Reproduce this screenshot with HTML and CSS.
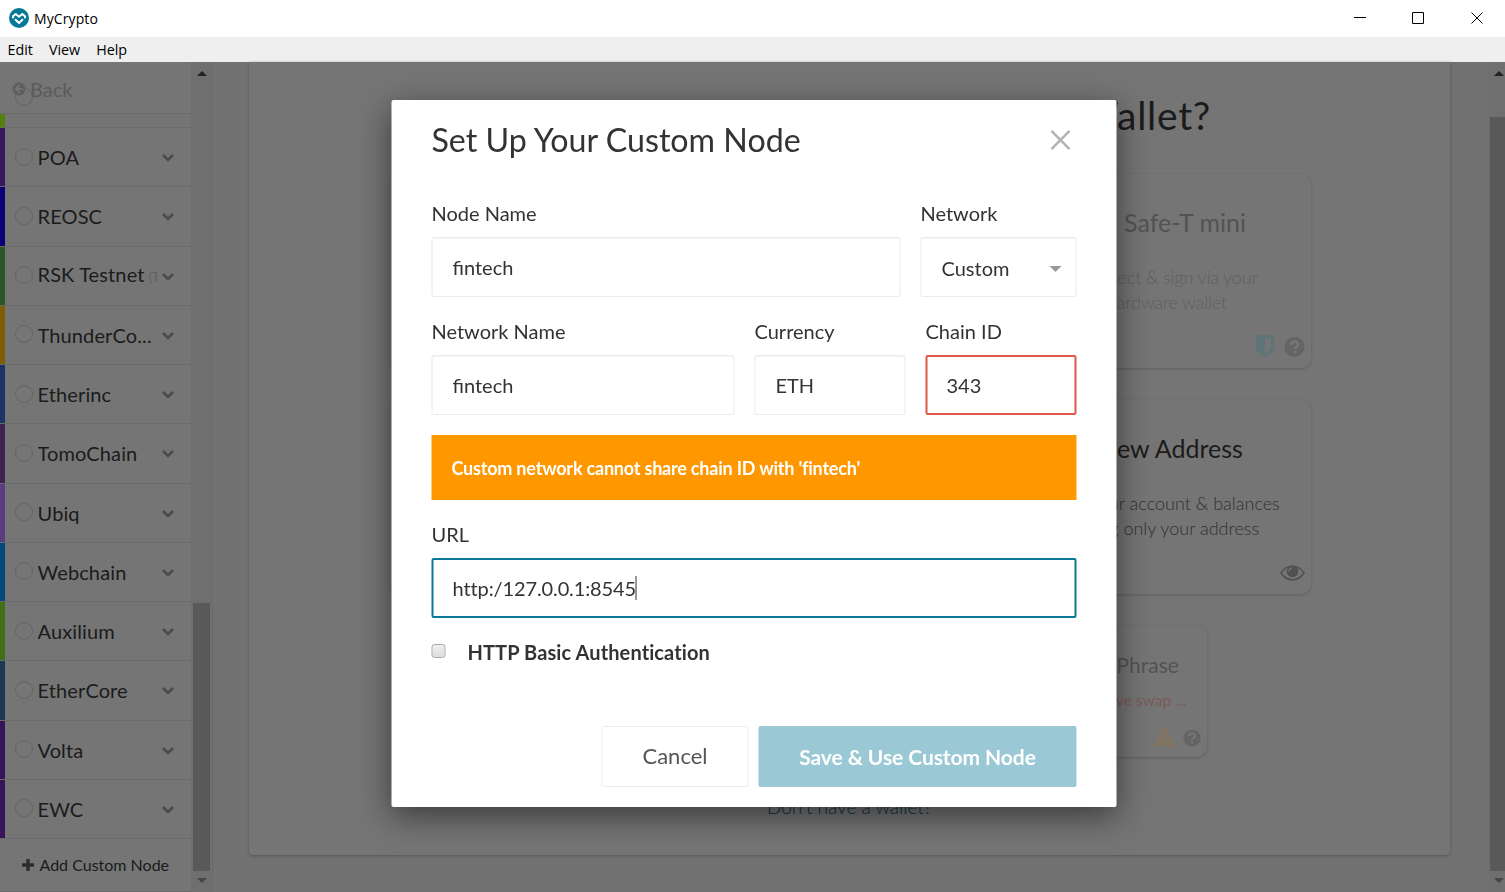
FILE: index.html
```html
<!DOCTYPE html>
<html lang="en">
<head>
<meta charset="utf-8">
<title>MyCrypto</title>
<link rel="stylesheet" href="styles.css">
</head>
<body>
<svg class="sprites" aria-hidden="true">
  <symbol id="chevron" viewBox="0 0 12 9"><path d="M1 2l5 5 5-5" fill="none" stroke="currentColor" stroke-width="2.6"/></symbol>
  <symbol id="help" viewBox="0 0 22 22"><circle cx="11" cy="11" r="10.5" fill="currentColor"/><path d="M7.3 8.6C7.3 4.400 14.900 4.400 14.900 8.400c0 2.600-3.600 2.600-3.600 5" fill="none" stroke="#757575" stroke-width="2.8"/><rect x="9.600" y="14.900" width="3.200" height="3" fill="#757575"/></symbol>
</svg>
<header class="titlebar">
  <svg class="logo" viewBox="0 0 20 20"><circle cx="10" cy="10" r="10" fill="#077896"/><path d="M4 9.600V8.300L6.700 6 10 8.700 13.300 6 16 8.300V9.600M6.600 11.800L10 15l3.400-3.200" fill="none" stroke="#fff" stroke-width="2" stroke-linejoin="round" stroke-linecap="round"/></svg>
  <span class="app-name">MyCrypto</span>
  <svg class="win" viewBox="0 0 175 37" fill="none" stroke="#000"><path d="M24 17.500h12M82.500 12.500h11v11h-11zM141.500 12.500l11 11M152.500 12.500l-11 11"/></svg>
</header>
<nav class="menubar"><span>Edit</span><span>View</span><span>Help</span></nav>
<main class="app">
  <aside class="sidebar">
    <div class="back"><svg viewBox="0 0 14 14"><circle cx="7" cy="7" r="6.500" fill="#5e5e5e"/><path d="M7.500 3L4 7l3.500 4M4 7h7" fill="none" stroke="#777" stroke-width="2"/></svg><span>Back</span><i class="radio"></i></div>
    <div class="stub"></div>
    <div class="net poa"><i class="radio"></i><span>POA</span><svg><use href="#chevron"/></svg></div>
    <div class="net reosc"><i class="radio"></i><span>REOSC</span><svg><use href="#chevron"/></svg></div>
    <div class="net rsk"><i class="radio"></i><span>RSK Testnet <small>(Testnet)</small></span><svg><use href="#chevron"/></svg></div>
    <div class="net thunder"><i class="radio"></i><span>ThunderCo...</span><svg><use href="#chevron"/></svg></div>
    <div class="net etherinc"><i class="radio"></i><span>Etherinc</span><svg><use href="#chevron"/></svg></div>
    <div class="net tomo"><i class="radio"></i><span>TomoChain</span><svg><use href="#chevron"/></svg></div>
    <div class="net ubiq"><i class="radio"></i><span>Ubiq</span><svg><use href="#chevron"/></svg></div>
    <div class="net webchain"><i class="radio"></i><span>Webchain</span><svg><use href="#chevron"/></svg></div>
    <div class="net auxilium"><i class="radio"></i><span>Auxilium</span><svg><use href="#chevron"/></svg></div>
    <div class="net ethercore"><i class="radio"></i><span>EtherCore</span><svg><use href="#chevron"/></svg></div>
    <div class="net volta"><i class="radio"></i><span>Volta</span><svg><use href="#chevron"/></svg></div>
    <div class="net ewc"><i class="radio"></i><span>EWC</span><svg><use href="#chevron"/></svg></div>
    <div class="add"><svg viewBox="0 0 12 12"><path d="M6 0v12M0 6h12" stroke="#2c2c2c" stroke-width="3.400"/></svg><span>Add Custom Node</span></div>
  </aside>
  <div class="scroll inner"><i class="up"></i><b></b><i class="down"></i></div>
  <section class="content">
    <div class="panel">
      <h1>Wallet?</h1>
      <div class="row">
        <article class="card"></article>
        <article class="card"></article>
        <article class="card muted"><h2 class="with-logo">Safe-T mini</h2><p>Connect &amp; sign via your<br>hardware wallet</p>
          <footer><svg class="shield" viewBox="0 0 18 22"><path d="M0 0h18v11c0 5-4 9-9 11C4 20 0 16 0 11z" fill="#5e7479"/><path d="M9 3h6v8c0 3.500-2 6-6 8z" fill="#757575"/></svg><svg class="help"><use href="#help"/></svg></footer></article>
      </div>
      <div class="row">
        <article class="card"></article>
        <article class="card"></article>
        <article class="card"><h2>View Address</h2><p>See your account &amp; balances<br>using only your address</p>
          <footer><svg class="eye" viewBox="0 0 25 16"><path d="M1 8C7-1 18-1 24 8 18 17 7 17 1 8z" fill="none" stroke="#505050" stroke-width="1.500"/><circle cx="12.500" cy="6.500" r="5.800" fill="#505050"/><path d="M9 6.500c0-2 1.300-3.300 3.200-3.300" fill="none" stroke="#757575" stroke-width="1.300"/></svg></footer></article>
      </div>
      <div class="row small">
        <article class="card"></article>
        <article class="card"></article>
        <article class="card muted"><h2>Mnemonic Phrase</h2><p>have swap ...</p>
          <footer><svg class="warn" viewBox="0 0 22 20"><path d="M11 0q1 0 1.500 1l9 17q.5 2-1.500 2H2q-2 0-1.500-2l9-17Q10 0 11 0z" fill="#83745d"/><path d="M11 6.500v6M11 14.500v3" stroke="#757575" stroke-width="2.800"/></svg><svg class="help" viewBox="0 0 22 22"><use href="#help" width="22" height="22"/></svg></footer></article>
      </div>
      <a class="none">Don't have a wallet?</a>
    </div>
  </section>
  <div class="scroll outer"><i class="up"></i><b></b><i class="down"></i></div>
</main>
<section class="modal" role="dialog">
  <div class="modal-head"><h3>Set Up Your Custom Node</h3><svg viewBox="0 0 20 20"><path d="M1.700 1.700l16.600 16.600M18.300 1.700L1.700 18.300" stroke="#b3b3b3" stroke-width="2.500" stroke-linecap="round"/></svg></div>
  <div class="fields first">
    <label>Node Name<div class="input">fintech</div></label>
    <label>Network<div class="input select">Custom<i></i></div></label>
  </div>
  <div class="fields second">
    <label>Network Name<div class="input">fintech</div></label>
    <label>Currency<div class="input">ETH</div></label>
    <label>Chain ID<div class="input invalid">343</div></label>
  </div>
  <div class="alert">Custom network cannot share chain ID with 'fintech'</div>
  <label class="url">URL<div class="input focus"><span>http:/127.0.0.1:8545</span><i class="caret"></i></div></label>
  <div class="auth"><i></i><span>HTTP Basic Authentication</span></div>
  <div class="actions"><button class="cancel">Cancel</button><button class="save">Save &amp; Use Custom Node</button></div>
</section>
</body>
</html>
```
FILE: styles.css
```css
* { box-sizing: border-box; }
body { margin: 0; width: 1505px; height: 892px; overflow: hidden; font-family: Lato, "Open Sans", sans-serif; background: #727272; color: #1b1b1b; }
.sprites { display: none; }
svg { display: block; flex: none; }
.titlebar { height: 37px; background: #fff; display: flex; align-items: center; padding-left: 9px; font: 15px "Open Sans", sans-serif; color: #000; }
.logo { width: 20px; height: 20px; margin-top: -1px; }
.app-name { margin-left: 5px; font-size: 14px; letter-spacing: .1px; margin-top: -1px; }
.win { width: 175px; height: 37px; margin-left: auto; }
.menubar { height: 25px; background: #efefef; display: flex; align-items: center; gap: 16px; padding-left: 7.500px; font: 14.300px "Open Sans", sans-serif; color: #000; }
.app { display: flex; height: 830px; }

.sidebar { width: 191px; background: #757575; flex: none; padding-right: 1px; border-bottom: 1px solid #696969; }
.back { height: 52px; border-bottom: 1px solid #6b6b6b; display: flex; align-items: center; padding: 2px 0 0 12px; gap: 4px; font-size: 20px; color: #5b5b5b; position: relative; }
.back svg { width: 14px; height: 14px; }
.radio { width: 18px; height: 18px; border: 1px solid #646464; border-radius: 50%; flex: none; }
.back .radio { position: absolute; left: 15px; top: 26px; }
.stub { height: 14px; border-left: 5px solid #55800f; border-bottom: 1px solid #6b6b6b; }
.net { height: 59.250px; border-bottom: 1px solid #6b6b6b; box-shadow: inset 5px 0 var(--c); display: flex; align-items: center; padding: 1px 16px 0 15px; font-size: 20px; }
.net .radio { margin-top: -2px; }
.net span { width: 119.500px; margin: -1.200px 0 0 4.500px; white-space: nowrap; overflow: hidden; line-height: 28px; letter-spacing: .12px; }
.net small { font-size: 13px; font-weight: 300; color: #505050; margin-left: -1px; }
.net svg { width: 12px; height: 9px; margin-left: 5px; color: #4b4b4b; }
.poa { --c: #3b1760; } .reosc { --c: #0b0078; } .rsk { --c: #2b552a; } .thunder { --c: #7f5d00; }
.etherinc { --c: #1d3565; } .tomo { --c: #3d2350; } .ubiq { --c: #5a3d80; } .webchain { --c: #00497a; }
.auxilium { --c: #406f14; } .ethercore { --c: #1c3852; } .volta, .ewc { --c: #371458; }
.add { height: 52px; display: flex; align-items: center; padding: 0 0 1px 22px; gap: 5.500px; font-size: 16px; white-space: nowrap; }
.add svg { width: 12px; height: 12px; }

.scroll { background: #6f6f6f; display: flex; flex-direction: column; align-items: center; flex: none; }
.scroll i { border: 5px solid transparent; border-top-width: 0; border-bottom: 5px solid #222; margin-top: 9px; }
.scroll .down { border-bottom: 0; border-top: 5px solid #454545; margin-top: 7px; }
.scroll b { background: #595959; }
.inner { width: 22px; border-right: 1px solid #696969; }
.inner b { width: 17px; height: 268px; margin-top: 527px; }
.outer { width: 17px; padding-left: 2px; }
.outer b { width: 15px; height: 754px; margin-top: 41px; }
.outer i { transform: translateX(1px); }

.content { flex: 1; padding-left: 36px; }
.panel { width: 1201px; height: 793px; background: #757575; border-radius: 0 0 4px 4px; box-shadow: 0 1px 3px #555; display: flex; flex-direction: column; align-items: center; }
h1 { margin: 26px 239px 0 0; align-self: flex-end; height: 86px; line-height: 55px; font-size: 39px; font-weight: 400; letter-spacing: .7px; white-space: nowrap; }
.row { display: grid; grid-template-columns: repeat(3, 285.500px); gap: 32.500px; margin: 0 0 32px 2px; }
.card { height: 194px; border-radius: 10px; box-shadow: 0 1px 3px #5f5f5f; background: #757575; display: flex; flex-direction: column; align-items: center; text-align: center; padding: 31px 6px 10px; }
.card h2 { margin: 0; font-size: 25px; line-height: 34px; font-weight: 400; }
.card .with-logo { padding-left: 33px; }
.card p { margin: 26px 0 0; font-size: 18px; line-height: 25px; font-weight: 300; white-space: nowrap; color: #303030; }
.card.muted h2 { color: #535353; }
.card.muted p { color: #5f5f5f; letter-spacing: -.15px; padding-right: 3px; }
.card footer { margin-top: auto; align-self: flex-end; display: flex; gap: 10px; align-items: center; color: #646464; }
.card:not(.muted) footer { margin-bottom: -1px; }
.shield { width: 18px; height: 22px; margin-top: -2px; }
.help { width: 21px; height: 22px; }
.row .eye { width: 25px; height: 16px; margin-bottom: 4px; }
.small { grid-template-columns: repeat(3, 216px); gap: 33px; margin: 0 0 35px; }
.small .card { height: 131px; padding: 24px 6px 10px; }
.small .card h2 { font-size: 21px; line-height: 30px; padding-right: 5px; }
.small .card p { font-size: 15.500px; line-height: 20px; margin-top: 10px; font-weight: 400; color: #795a58; padding: 0 0 0 89px; letter-spacing: 0; }
.small .help { width: 18px; height: 18px; }
.small footer { gap: 8px; }
.warn { width: 21px; height: 20px; margin-top: -1px; }
.none { font-size: 19px; line-height: 30px; font-weight: 300; color: #05303d; }

.modal { position: absolute; left: 391px; top: 100px; width: 725px; height: 707px; transform: translateX(.5px); will-change: transform; background: #fff; border-radius: 2px; padding: 15px 40px 20px; box-shadow: 0 9px 32px rgba(0,0,0,.5); color: #333; font-size: 20px; display: flex; flex-direction: column; }
.modal-head { display: flex; justify-content: space-between; align-items: center; padding-right: 6px; height: 49px; }
h3 { margin: 0; font-size: 32.200px; line-height: 46px; font-weight: 400; white-space: nowrap; }
.modal-head svg { width: 20px; height: 20px; }
.fields { display: grid; column-gap: 20px; line-height: 30px; }
.first { margin-top: 34px; grid-template-columns: 469px 156px; }
.second { margin-top: 19px; grid-template-columns: 303px 151px 151px; }
.input { height: 60px; margin-top: 9px; border: 1px solid #e5ecf3; border-radius: 2px; padding: 0 20px; display: flex; align-items: center; box-shadow: inset 0 1px 1px rgba(0,0,0,.05); }
.select { justify-content: space-between; padding: 2px 14px 0 20px; }
.select i { border: 6px solid transparent; border-top-color: #999; border-bottom: 0; margin-top: 2px; }
.invalid { border: 2px solid #dd5948; padding-left: 19px; box-shadow: none; }
.alert { height: 65px; margin-top: 20px; background: #ff9800; color: #fff; font-size: 18px; font-weight: 700; padding: 0 20px; display: flex; align-items: center; letter-spacing: -.2px; }
.url { margin-top: 19px; line-height: 30px; display: block; }
.focus { border: 2px solid #077896; padding-left: 19px; box-shadow: none; letter-spacing: -.11px; }
.caret { width: 1px; height: 24px; background: #333; margin-left: -1px; }
.auth { margin-top: 19px; height: 30px; display: flex; align-items: center; font-weight: 700; letter-spacing: .1px; }
.auth i { width: 14px; height: 14px; margin: -2px 22px 0 0; border: 1px solid #aaa; border-radius: 3px; background: linear-gradient(#eee, #dcdcdc); }
.actions { margin-top: auto; display: flex; justify-content: flex-end; gap: 10px; }
button { height: 61px; border-radius: 2px; font-family: Lato, sans-serif; font-size: 22px; padding: 0 0 2px; white-space: nowrap; }
.cancel { width: 147px; background: #fff; border: 1px solid #e5ecf3; color: #555; }
.save { width: 318px; background: #9ac9d5; border: 0; color: #fff; font-size: 21px; font-weight: 700; letter-spacing: -.07px; padding-bottom: 1px; }
```
